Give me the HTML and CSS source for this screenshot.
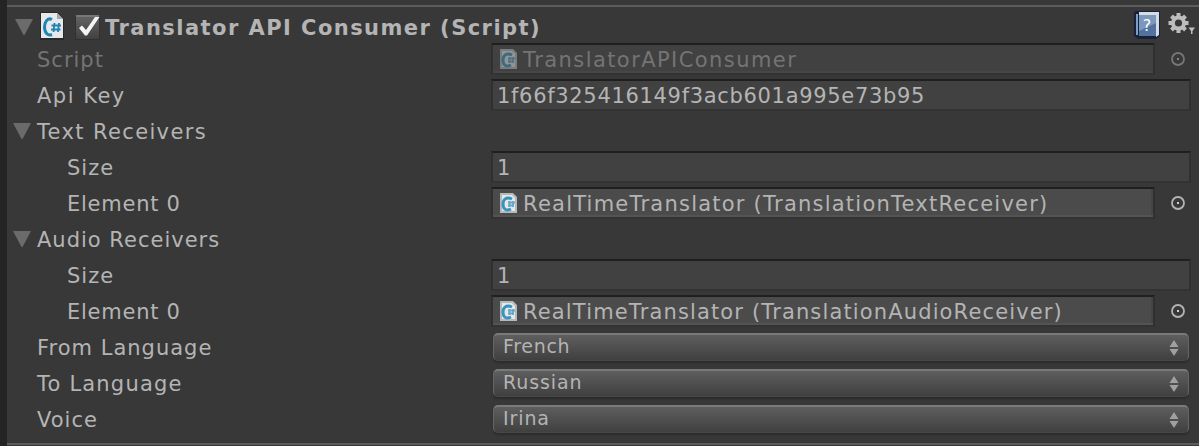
FILE: index.html
```html
<!DOCTYPE html>
<html lang="en">
<head>
<meta charset="utf-8">
<title>Translator API Consumer</title>
<link rel="stylesheet" href="styles.css">
</head>
<body>
<svg width="0" height="0" class="defs">
  <symbol id="sharp" viewBox="0 0 24 28">
    <path d="M0 0H17L24 7V28H0Z" fill="#292929"/>
    <path d="M1 1H17L23 7V26H1Z" fill="#e6e9eb"/>
    <path d="M17 1V7H23Z" fill="#a3a8ac"/>
    <path d="M12 7.500C7 5 4.500 11 4.500 15C4.500 21 8 24 12 22.500" fill="none" stroke="#2383b0" stroke-width="3"/>
    <path d="M14.500 11L13.500 20M19 11L18 20M11.500 13.500H21M11 17.500H20.500" fill="none" stroke="#2383b0" stroke-width="1.900"/>
  </symbol>
  <symbol id="mini" viewBox="0 0 18 20">
    <path d="M1 0H14L18 4V20H1Z" fill="#b4b9bc"/>
    <path d="M3 2H13L16 5V18H3Z" fill="#e3e8eb"/>
    <path d="M13 6C7 3 4 7 4 11C4 17 8 18 12 16" fill="none" stroke="#3d92bb" stroke-width="3"/>
    <path d="M9 9.500H16M9 12.500H15M10.500 8V14M14 8V14" fill="none" stroke="#64a9c9" stroke-width="2"/>
  </symbol>
  <symbol id="target" viewBox="0 0 16 16">
    <circle cx="8" cy="8" r="6" fill="none" stroke="#b4b4b4" stroke-width="1.800"/>
    <rect x="7" y="7" width="2" height="2" fill="#d0d0d0"/>
  </symbol>
  <symbol id="fold" viewBox="0 0 18 16"><path d="M0 0H18L9.500 16H8.500Z" fill="#6b6b6b"/></symbol>
  <symbol id="arrows" viewBox="0 0 10 16"><path d="M5 0L9.500 7H.5ZM.5 9H9.500L5 16Z" fill="#a0a0a0"/></symbol>
</svg>
<main class="inspector">
  <header class="header">
    <svg class="fold"><use href="#fold"/></svg>
    <svg class="script-icon"><use href="#sharp"/></svg>
    <span class="check"><svg viewBox="0 0 25 24"><path d="M4 13L7 10.500L11 15L20 2H24.500L12 20.500H10Z" fill="#f4f4f4"/></svg></span>
    <h1 class="title">Translator API Consumer (Script)</h1>
    <svg class="book" viewBox="0 0 26 28">
      <path d="M1 0H26V25L22 28H4L0 25V3Z" fill="#17213a"/>
      <path d="M5 1H25V24L22 26V4H5Z" fill="#d5dce3"/>
      <path d="M2 3H4V24H2Z" fill="#7e9dc4"/>
      <path d="M5 4H22V25H5Z" fill="#53729f"/>
      <path d="M5 4H22V12L5 20Z" fill="#7d98bd"/>
      <text x="13" y="20" class="help">?</text>
    </svg>
    <svg class="gear" viewBox="0 0 28 24">
      <g stroke="#bdbdbd" stroke-width="4"><path d="M10.500 1V21M.5 11H20.500M3.500 4L17.500 18M17.500 4L3.500 18"/></g>
      <circle cx="10.500" cy="11" r="7.500" fill="#bdbdbd"/>
      <circle cx="10.500" cy="11" r="3.600" fill="#383838"/>
      <path d="M20.500 15.500H27L24.500 19V22H23V19Z" fill="#bdbdbd"/>
    </svg>
  </header>
  <div class="row disabled"><span class="label">Script</span><div class="field object"><svg class="mini"><use href="#mini"/></svg><span class="t-script">TranslatorAPIConsumer</span></div><svg class="target"><use href="#target"/></svg></div>
  <div class="row"><span class="label l-api">Api Key</span><div class="field"><span class="t-key">1f66f325416149f3acb601a995e73b95</span></div></div>
  <div class="row group"><svg class="fold"><use href="#fold"/></svg><span class="label l-text">Text Receivers</span></div>
  <div class="row child"><span class="label">Size</span><div class="field"><span>1</span></div></div>
  <div class="row child"><span class="label l-element">Element 0</span><div class="field object"><svg class="mini"><use href="#mini"/></svg><span class="t-text">RealTimeTranslator (TranslationTextReceiver)</span></div><svg class="target"><use href="#target"/></svg></div>
  <div class="row group"><svg class="fold"><use href="#fold"/></svg><span class="label">Audio Receivers</span></div>
  <div class="row child"><span class="label">Size</span><div class="field"><span>1</span></div></div>
  <div class="row child"><span class="label l-element">Element 0</span><div class="field object"><svg class="mini"><use href="#mini"/></svg><span class="t-audio">RealTimeTranslator (TranslationAudioReceiver)</span></div><svg class="target"><use href="#target"/></svg></div>
  <div class="row"><span class="label">From Language</span><div class="popup"><span class="t-french">French</span><svg class="arrows"><use href="#arrows"/></svg></div></div>
  <div class="row"><span class="label l-to">To Language</span><div class="popup"><span>Russian</span><svg class="arrows"><use href="#arrows"/></svg></div></div>
  <div class="row"><span class="label">Voice</span><div class="popup"><span>Irina</span><svg class="arrows"><use href="#arrows"/></svg></div></div>
</main>
</body>
</html>
```
FILE: styles.css
```css
* { box-sizing: border-box; }
body {
  margin: 0;
  background: #383838;
  color: #b4b4b4;
  font: 21px/38px "DejaVu Sans", Verdana, sans-serif;
  letter-spacing: 1px;
  white-space: nowrap;
}
.defs { position: absolute; }
svg { display: block; flex: none; }
.inspector {
  height: 446px;
  padding-top: 5px;
  border-left: 7px solid #242424;
  background:
    linear-gradient(#5c5c5c, #5c5c5c) 0 5px / 100% 2px no-repeat,
    linear-gradient(#5c5c5c, #5c5c5c) 0 443px / 100% 2px no-repeat,
    #383838;
}
.header { display: flex; height: 36px; padding: 7px 3px 0 8px; }
.fold { width: 18px; height: 16px; }
.header .fold { margin-top: 7px; }
.script-icon { width: 24px; height: 28px; margin-left: 7px; }
.check {
  width: 25px;
  height: 25px;
  margin: 3px 0 0 11px;
  border: 1px solid #303030;
  border-top: 2px solid #777;
  border-radius: 2px;
  background: linear-gradient(#626262, #414141);
}
.check svg { width: 25px; height: 24px; margin: -2px 0 0 -1px; overflow: visible; }
.title { flex: 1; margin: -3px 0 0 5px; font-size: 21px; line-height: 38px; letter-spacing: 1.45px; }
.book { width: 26px; height: 28px; margin: -1px 8px 0 0; }
.help { fill: #fff; font: 16px "DejaVu Sans", sans-serif; text-anchor: middle; letter-spacing: 0; }
.gear { width: 28px; height: 24px; }
.row { display: flex; height: 36px; padding-left: 30px; }
.row .label { width: 454px; flex: none; }
.group { padding-left: 6px; }
.group .fold { margin: 10px 6px 0 0; }
.child { padding-left: 60px; }
.child .label { width: 424px; }
.l-api { letter-spacing: 1.5px; }
.l-text { letter-spacing: 1.36px; }
.l-element { letter-spacing: .75px; }
.l-to { letter-spacing: 1.2px; }
.t-key { letter-spacing: .68px; }
.t-script { letter-spacing: 1.43px; }
.t-text { letter-spacing: 1.23px; }
.t-audio { letter-spacing: 1.14px; }
.field {
  width: 700px;
  height: 32px;
  margin-top: 2px;
  padding-left: 4px;
  border: 2px solid #303030;
  border-top-color: #1f1f1f;
  border-bottom-color: #333;
  background: #414141;
  line-height: 30px;
}
.object {
  display: flex;
  width: 664px;
  padding-left: 6px;
  background: #4b4b4b;
  box-shadow: inset 0 -2px #535353, inset -2px 0 #444;
}
.mini { width: 18px; height: 20px; margin: 4px 6px 0 0; }
.target { width: 16px; height: 16px; margin: 10px 0 0 15px; }
.disabled .label, .disabled .object span { color: #747474; }
.disabled .object { background: #414141; box-shadow: inset 0 -2px #464646; }
.disabled svg { opacity: .5; }
.popup {
  display: flex;
  justify-content: space-between;
  width: 696px;
  height: 28px;
  margin: 4px 0 0 2px;
  padding: 0 9px;
  border: 1px solid #666;
  border-top: 2px solid #7a7a7a;
  border-bottom: 1px solid #484848;
  border-radius: 5px;
  background: linear-gradient(#5e5e5e, #404040);
  box-shadow: 0 2px 2px #2c2c2c;
  font-size: 19px;
  letter-spacing: .9px;
  line-height: 22px;
}
.t-french { letter-spacing: .7px; }
.arrows { width: 10px; height: 16px; margin-top: 5px; }
```
